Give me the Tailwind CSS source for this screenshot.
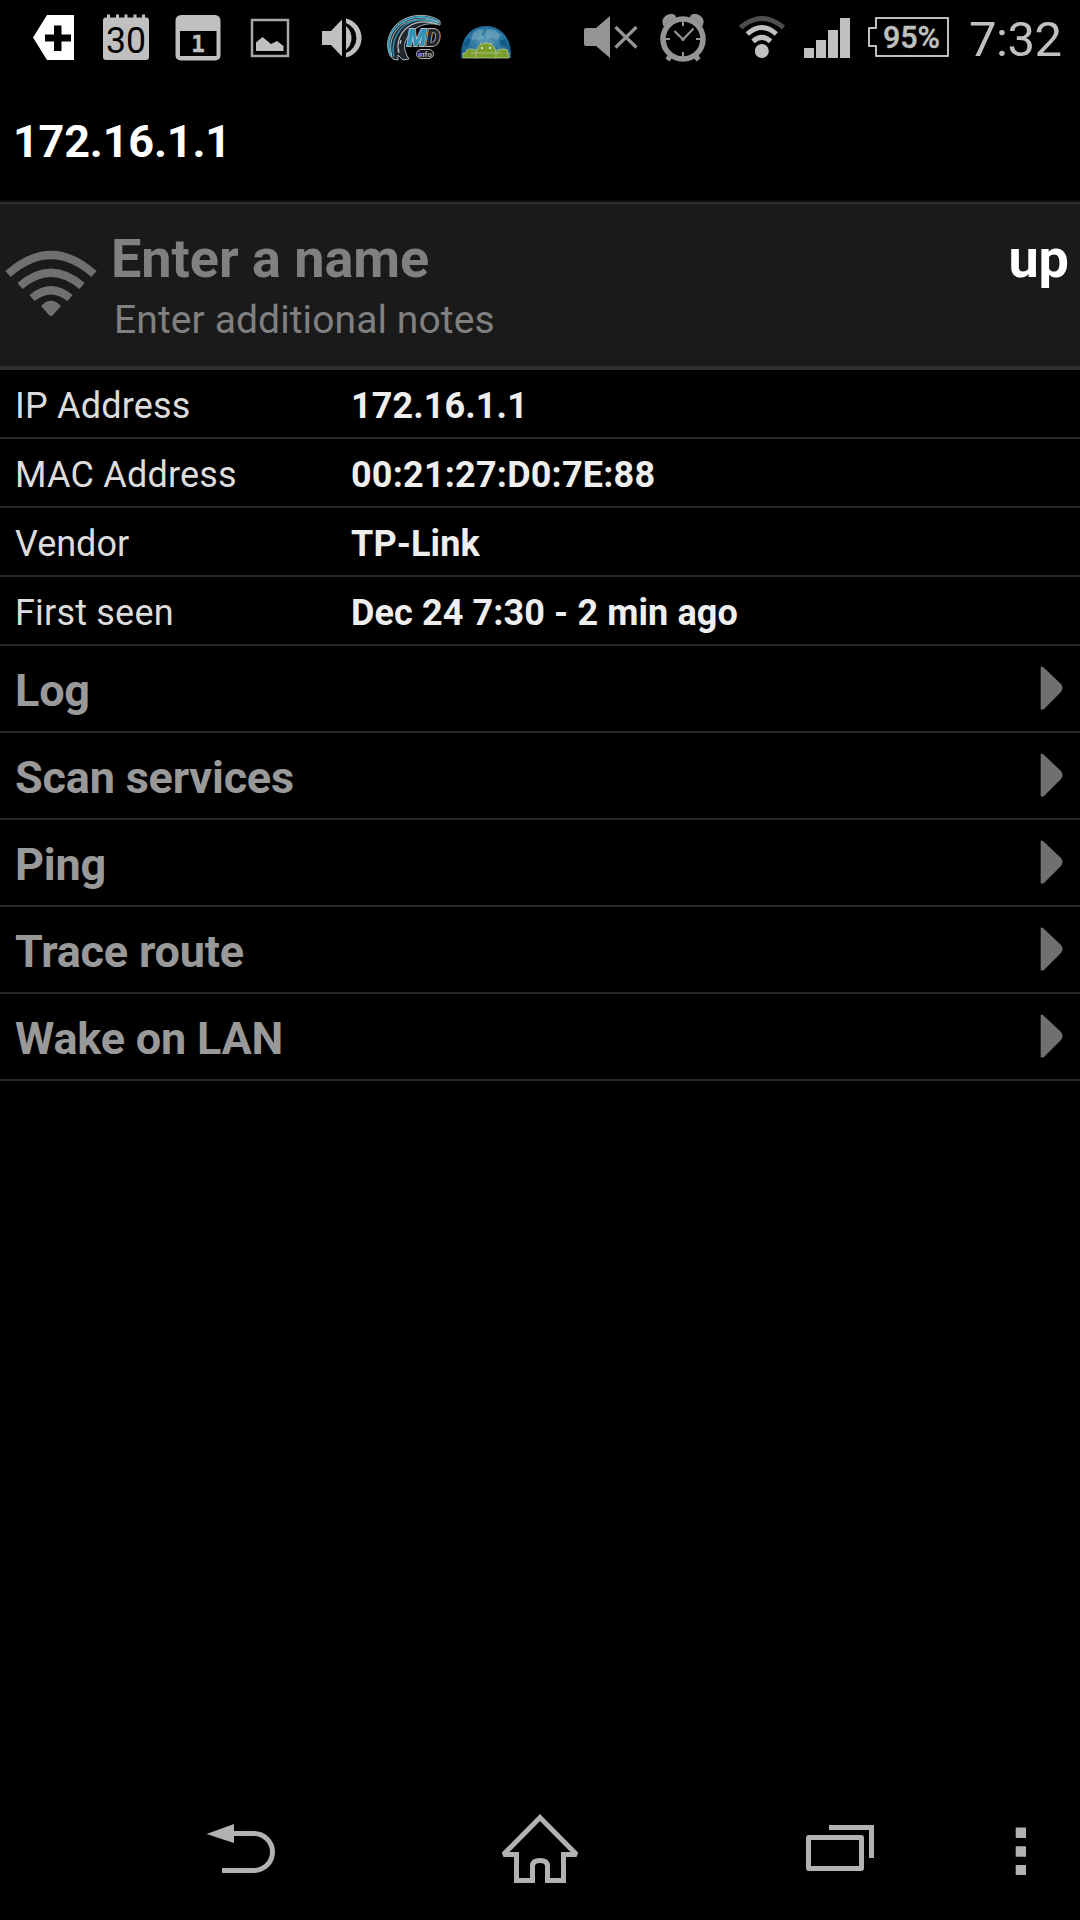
<!DOCTYPE html>
<html lang="en">
<head>
    <meta charset="UTF-8">
    <meta name="viewport" content="width=device-width, initial-scale=1.0">
    <title>172.16.1.1</title>
    <script src="https://cdn.jsdelivr.net/npm/@tailwindcss/browser@4"></script>
</head>
<body class="bg-black">
<div class="w-[1080px] h-[1920px] flex flex-col overflow-hidden bg-black font-['Roboto',sans-serif] leading-none whitespace-nowrap">

    <!-- status bar -->
    <header class="flex h-[76px] shrink-0 text-[#c0c0c0]">
        <svg class="w-[90px] h-[76px] shrink-0" viewBox="0 0 90 76">
            <path fill="#fff" d="M33 37.500 47 15H74V60H47Z"/>
            <path fill="#000" d="M54 25.500h7.500V34.500H71V41.500H61.500V51H54V41.500H45V34.500H54Z"/>
        </svg>
        <svg class="w-[70px] h-[76px] shrink-0" viewBox="90 0 70 76">
            <rect x="103" y="17.500" width="46" height="42.500" rx="3" fill="#c0c0c0"/>
            <path stroke="#c0c0c0" stroke-width="3" d="M108.500 14.500v5M117.500 14.500v5M126 14.500v5M135 14.500v5M143.500 14.500v5"/>
            <text x="106" y="52.500" font-size="36" font-weight="400" textLength="40" lengthAdjust="spacingAndGlyphs" fill="#000">30</text>
        </svg>
        <svg class="w-[80px] h-[76px] shrink-0" viewBox="160 0 80 76">
            <path fill="#c0c0c0" fill-rule="evenodd" d="M181 15h34a5.500 5.500 0 0 1 5.500 5.500v35a5 5 0 0 1-5 5h-35a5 5 0 0 1-5-5v-35A5.500 5.500 0 0 1 181 15ZM180 31V56H216.500V31Z"/>
            <text x="198" y="52" text-anchor="middle" font-family="DejaVu Sans Mono, monospace" font-weight="700" font-size="22.500" fill="#c0c0c0" stroke="#c0c0c0" stroke-width=".4">1</text>
        </svg>
        <svg class="w-[70px] h-[76px] shrink-0" viewBox="240 0 70 76">
            <rect x="252" y="20" width="36" height="36" fill="none" stroke="#a8a8a8" stroke-width="2.500"/>
            <path fill="#c0c0c0" d="M256 51V42.500L262.500 37 271 44 277 41 283.500 46V51Z"/>
        </svg>
        <svg class="w-[65px] h-[76px] shrink-0" viewBox="310 0 65 76">
            <path fill="#c0c0c0" d="M322 31H331L342 19.500V56.500L331 45H322Z"/>
            <path fill="#c0c0c0" d="M346 18.500a20 20 0 0 1 0 39v-4.500a16 16 0 0 0 0-30Z"/>
            <path fill="#c0c0c0" d="M346 26Q351.500 31 351.500 38T346 50Z"/>
        </svg>
        <!-- MD info -->
        <svg class="w-[75px] h-[76px] shrink-0" viewBox="375 0 75 76">
            <path fill="#20262b" stroke="#aab4b8" stroke-width="1" d="M393 59C384 50 387 33 397 24 409 13 429 13 440 21L440 25C426 21 415 27 409 35 403 43 403 50 409 59L403 60 398 55V60Z"/>
            <path fill="none" stroke="#3fa5c4" stroke-width="2" d="M391 56C385 43 391 30 401 23 413 15 427 16 439 22"/>
            <path fill="none" stroke="#b8c0c2" stroke-width="1" d="M392 57C388 43 393 31 403 24 415 17 428 18 439 23"/>
            <path fill="none" stroke="#2f8fae" stroke-width="1.500" d="M394 57C391 44 396 32 405 25 415 18 427 19 438 24"/>
            <path fill="none" stroke="#b8c0c2" stroke-width="1.200" d="M399 53C396 43 400 33 408 27 416 21 427 21 437 24M398 52l1-3M400 44l1-4"/>
            <text x="407" y="46" font-size="23" font-weight="900" font-style="italic" textLength="19" lengthAdjust="spacingAndGlyphs" fill="#2d93b8" stroke="#b8bec0" stroke-width="1.800" paint-order="stroke">M</text>
            <text x="426" y="46" font-size="23" font-weight="900" font-style="italic" textLength="14" lengthAdjust="spacingAndGlyphs" fill="#25282b" stroke="#b8bec0" stroke-width="1.800" paint-order="stroke">D</text>
            <rect x="416.500" y="49.500" width="17" height="9" rx="4.500" fill="#181818" stroke="#b0b0b0"/>
            <text x="425" y="56.800" text-anchor="middle" font-size="8" font-weight="700" fill="#b0b0b0">info</text>
        </svg>
        <!-- globe with robots -->
        <svg class="w-[195px] h-[76px] shrink-0" viewBox="450 0 195 76">
            <defs>
                <radialGradient id="globe" cx=".5" cy=".45" r=".65">
                    <stop offset="0" stop-color="#5b9cb8"/><stop offset=".6" stop-color="#246f9e"/><stop offset="1" stop-color="#0b5684"/>
                </radialGradient>
            </defs>
            <path fill="url(#globe)" d="M461 58C460 38 471 26 486 26S512 38 511 58Z"/>
            <path fill="#83b5c4" opacity=".5" d="M473 33l6-4 5 1-3 5 4 2-5 4-5-2-4 2ZM487 29l8 1 6 5-4 5-6-3-4 2-2-5Z"/>
            <path fill="#0d4d7a" opacity=".7" d="M463 45l5-7 3 2-3 7ZM499 41l6-2 3 8-7-2Z"/>
            <g fill="#7a9f2c" stroke="#b4c69a" stroke-width=".8">
                <path d="M463 58V53H466Q465 49 471 49T477 53V58ZM495 58V53Q496 49 503 49T507 53H509V58Z"/>
                <path d="M476 58V52Q478 43 486 43T496 52V58ZM480 42l2 3M492 42l-2 3M471 53H501"/>
            </g>
            <path fill="#d5dfc4" d="M481 47h2v2h-2ZM489 47h2v2h-2Z"/>
            <path fill="#959595" d="M586 28H596L610 16V58L596 46H586a2 2 0 0 1-2-2V30a2 2 0 0 1 2-2Z"/>
            <path stroke="#959595" stroke-width="3.200" d="M615.500 27 636.500 47.500M636.500 27 615.500 47.500"/>
        </svg>
        <svg class="w-[80px] h-[76px] shrink-0" viewBox="645 0 80 76" fill="none" stroke="#959595">
            <circle cx="683" cy="39" r="20" stroke-width="5.500"/>
            <path fill="#959595" stroke="#959595" stroke-width="1" d="M663.500 25Q661.500 19 666 16 672 12.500 675.500 16L675 18Q668 20 664 26ZM702.500 25Q704.500 19 700 16 694 12.500 690.500 16L691 18Q698 20 702 26Z"/>
            <path stroke-width="5" d="M670.500 55.500 667.500 60M695.500 55.500 698.500 60"/>
            <path stroke-width="2" d="M683 21v5M683 52v5M665 39h5M696 39h5"/>
            <path stroke-width="2.200" d="M674.500 31 683 39.500 693.500 28.500"/>
            <circle cx="683" cy="39.500" r="1.500" fill="#959595" stroke="none"/>
        </svg>
        <svg class="w-[70px] h-[76px] shrink-0" viewBox="725 0 70 76" fill="none" stroke="#c0c0c0" stroke-width="5">
            <circle cx="761.800" cy="51" r="7" fill="#c0c0c0" stroke="none"/>
            <path d="M753 41.300Q761.800 33.500 770.600 41.300"/>
            <path d="M747.300 34Q761.800 21 776.300 34"/>
            <path stroke="#4d4d4d" d="M740.500 27.500Q761.800 9.500 783.500 27.500"/>
        </svg>
        <svg class="w-[63px] h-[76px] shrink-0" viewBox="795 0 63 76" fill="#c0c0c0">
            <path d="M804 48h10V58H804ZM816 40h10V58H816ZM828 30h10V58H828ZM840 18h10V58H840Z"/>
        </svg>
        <svg class="w-[100px] h-[76px] shrink-0" viewBox="858 0 100 76">
            <path fill="none" stroke="#c0c0c0" stroke-width="2" stroke-linejoin="round" d="M876 18H948V56H876V46H869V28H876Z"/>
            <text x="883" y="48.200" font-size="31.500" font-weight="500" textLength="57" lengthAdjust="spacingAndGlyphs" fill="#c0c0c0" stroke="#c0c0c0" stroke-width=".4">95%</text>
        </svg>
        <div class="pt-[15px] pl-[11px] text-[49px] tracking-[-0.5px]">7:32</div>
    </header>

    <h1 class="h-[124px] shrink-0 pt-[43px] pl-[13px] text-[45px] font-bold tracking-[-0.2px] text-white">172.16.1.1</h1>

    <!-- device summary -->
    <section class="flex h-[170px] shrink-0 border-t-[2px] border-[#0e0e0e] bg-[#1a1a1a]">
        <div class="flex w-full border-t-[2px] border-b-[4px] border-[#303030]">
            <svg class="ml-[4px] mt-[45px] w-[96px] h-[72px]" viewBox="4 248 96 72" fill="none" stroke="#707070" stroke-width="8">
                <path d="M8 273Q51 235 94 273"/>
                <path d="M20 285Q51 258.500 82 285"/>
                <path d="M32 297Q51 281.500 70 297"/>
                <path fill="#707070" stroke="none" d="M41 305Q51 294.500 61 305L53 314Q51 316 49 314Z"/>
            </svg>
            <div class="flex-1 pl-[11px] pt-[28px] text-[#808080]">
                <div class="text-[54px] font-bold tracking-[-0.05px]">Enter a name</div>
                <div class="pt-[15px] pl-[3px] text-[39px] tracking-[0.1px]">Enter additional notes</div>
            </div>
            <div class="pr-[11px] pt-[28px] text-[54px] font-bold text-white">up</div>
        </div>
    </section>

    <dl class="shrink-0 text-[36px]">
        <div class="flex h-[69px] border-b-2 border-[#282828] pt-[18px] pl-[15px]">
            <dt class="w-[336px] tracking-[0.2px] text-[#dcdcdc]">IP Address</dt>
            <dd class="font-bold tracking-[0.1px] text-[#eee]">172.16.1.1</dd>
        </div>
        <div class="flex h-[69px] border-b-2 border-[#282828] pt-[18px] pl-[15px]">
            <dt class="w-[336px] tracking-[0.2px] text-[#dcdcdc]">MAC Address</dt>
            <dd class="font-bold tracking-[0.2px] text-[#eee]">00:21:27:D0:7E:88</dd>
        </div>
        <div class="flex h-[69px] border-b-2 border-[#282828] pt-[18px] pl-[15px]">
            <dt class="w-[336px] text-[#dcdcdc]">Vendor</dt>
            <dd class="font-bold tracking-[0.1px] text-[#eee]">TP-Link</dd>
        </div>
        <div class="flex h-[69px] border-b-2 border-[#282828] pt-[18px] pl-[15px]">
            <dt class="w-[336px] tracking-[0.2px] text-[#dcdcdc]">First seen</dt>
            <dd class="font-bold tracking-[0.1px] text-[#eee]">Dec 24 7:30 - 2 min ago</dd>
        </div>
    </dl>

    <ul class="shrink-0 text-[45px] font-bold tracking-[-0.2px] text-[#999]">
        <li class="flex h-[87px] justify-between border-b-2 border-[#282828] pt-[20px] pr-[16px] pl-[15px]">
            <span class="pt-[2px]">Log</span>
            <svg class="w-[24px] h-[44px]" viewBox="0 0 24 44"><path fill="#707070" d="M.7 1Q1 0 3 1L21 18Q24 22 21 26L4 43Q2 44 .7 43Z"/></svg>
        </li>
        <li class="flex h-[87px] justify-between border-b-2 border-[#282828] pt-[20px] pr-[16px] pl-[15px]">
            <span class="pt-[2px]">Scan services</span>
            <svg class="w-[24px] h-[44px]" viewBox="0 0 24 44"><path fill="#707070" d="M.7 1Q1 0 3 1L21 18Q24 22 21 26L4 43Q2 44 .7 43Z"/></svg>
        </li>
        <li class="flex h-[87px] justify-between border-b-2 border-[#282828] pt-[20px] pr-[16px] pl-[15px]">
            <span class="pt-[2px]">Ping</span>
            <svg class="w-[24px] h-[44px]" viewBox="0 0 24 44"><path fill="#707070" d="M.7 1Q1 0 3 1L21 18Q24 22 21 26L4 43Q2 44 .7 43Z"/></svg>
        </li>
        <li class="flex h-[87px] justify-between border-b-2 border-[#282828] pt-[20px] pr-[16px] pl-[15px]">
            <span class="pt-[2px]">Trace route</span>
            <svg class="w-[24px] h-[44px]" viewBox="0 0 24 44"><path fill="#707070" d="M.7 1Q1 0 3 1L21 18Q24 22 21 26L4 43Q2 44 .7 43Z"/></svg>
        </li>
        <li class="flex h-[87px] justify-between border-b-2 border-[#282828] pt-[20px] pr-[16px] pl-[15px]">
            <span class="pt-[2px]">Wake on LAN</span>
            <svg class="w-[24px] h-[44px]" viewBox="0 0 24 44"><path fill="#707070" d="M.7 1Q1 0 3 1L21 18Q24 22 21 26L4 43Q2 44 .7 43Z"/></svg>
        </li>
    </ul>

    <!-- navigation bar -->
    <nav class="mt-auto flex h-[144px] shrink-0">
        <svg class="w-[380px] h-[144px]" viewBox="0 1776 380 144">
            <path fill="#b2b2b2" d="M206.500 1834 234 1824V1843Z"/>
            <path fill="none" stroke="#b2b2b2" stroke-width="5" d="M233 1833.500H254a18.500 18.500 0 0 1 0 37H222"/>
        </svg>
        <svg class="w-[320px] h-[144px]" viewBox="380 1776 320 144">
            <path fill="none" stroke="#b2b2b2" stroke-width="5" stroke-miterlimit="2" d="M540 1817.500 503.500 1854.500H516.500V1880.500H532.500V1866Q532.500 1860.500 540 1860.500T547.500 1866V1880.500H563.500V1854.500H576.500Z"/>
        </svg>
        <svg class="w-[260px] h-[144px]" viewBox="700 1776 260 144" fill="none" stroke="#b2b2b2" stroke-width="5">
            <rect x="808.500" y="1837.500" width="53" height="31" rx=".5"/>
            <path d="M829 1827.500H871.500V1858"/>
        </svg>
        <svg class="w-[120px] h-[144px]" viewBox="960 1776 120 144" fill="#b2b2b2">
            <path d="M1015.700 1827.500H1026V1838H1015.700ZM1015.700 1846.300H1026V1856.800H1015.700ZM1015.700 1865H1026V1875H1015.700Z"/>
        </svg>
    </nav>
</div>
</body>
</html>
